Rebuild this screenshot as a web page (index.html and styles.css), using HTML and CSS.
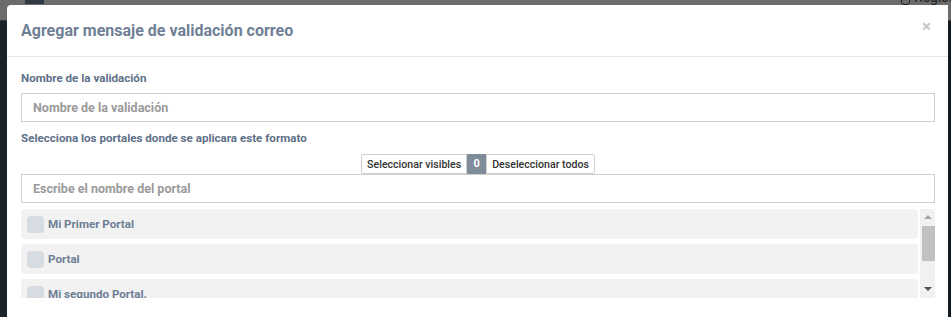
FILE: index.html
```html
<!DOCTYPE html>
<html lang="es">
<head>
    <meta charset="UTF-8">
    <title>Agregar mensaje de validación correo</title>
    <link rel="stylesheet" href="styles.css">
</head>
<body>
    <div class="app">
        <div class="topbar">
            <span class="tab"></span>
            <span class="user"><span class="user-icon"></span>Registro</span>
        </div>
    </div>

    <div class="modal">
        <div class="modal-header">
            <h4>Agregar mensaje de validación correo</h4>
            <span class="close">&times;</span>
        </div>
        <div class="modal-body">
            <label class="field-label">Nombre de la validación</label>
            <input type="text" class="field" placeholder="Nombre de la validación">

            <label class="field-label second">Selecciona los portales donde se aplicara este formato</label>
            <div class="btn-group">
                <button>Seleccionar visibles</button>
                <span class="badge">0</span>
                <button>Deseleccionar todos</button>
            </div>
            <input type="text" class="field" placeholder="Escribe el nombre del portal">

            <div class="list-wrap">
                <div class="portal-list">
                    <div class="portal"><span class="check"></span>Mi Primer Portal</div>
                    <div class="portal"><span class="check"></span>Portal</div>
                    <div class="portal"><span class="check"></span>Mi segundo Portal.</div>
                </div>
                <div class="scrollbar">
                    <span class="arrow up"></span>
                    <span class="thumb"></span>
                    <span class="arrow down"></span>
                </div>
            </div>
        </div>
    </div>
</body>
</html>
```

FILE: styles.css
```css
body {
    margin: 0;
    font-family: Roboto, "Liberation Sans", sans-serif;
    background-color: #0f1b21;
    height: 317px;
    overflow: hidden;
}

.app {
    height: 100%;
    background: linear-gradient(90deg, #1b2228 0, #1b2228 7px, transparent 7px);
}

.topbar {
    height: 20px;
    background-color: #6c6c6c;
    display: flex;
    justify-content: space-between;
    padding-left: 25px;
    border-bottom: 1px solid #3d3d3d;
}

.tab {
    width: 19px;
    height: 4px;
    background-color: #2f3a44;
}

.user {
    color: #222;
    font-size: 14px;
    line-height: 16px;
    height: 5px;
    padding-right: 2px;
    width: 48px;
    white-space: nowrap;
    overflow: hidden;
    display: flex;
    align-items: flex-end;
    gap: 4px;
}

.user-icon {
    width: 7px;
    height: 12px;
    border: 1px solid #222;
    border-radius: 3px;
    flex-shrink: 0;
}

/* Modal */
.modal {
    position: absolute;
    top: 5px;
    left: 7px;
    right: 3px;
    bottom: 0;
    overflow: hidden;
    background-color: #fff;
    border-radius: 4px 0 0 0;
}

.modal-header {
    display: flex;
    justify-content: space-between;
    align-items: center;
    padding: 16px 14px 15px 14px;
    border-bottom: 1px solid #e5e5e5;
}

.modal-header h4 {
    margin: 0;
    font-size: 16px;
    font-weight: 700;
    line-height: 20px;
    color: #6f7f95;
}

.close {
    font-size: 17px;
    line-height: 20px;
    color: #c8c8c8;
    font-weight: 700;
    margin-right: 3px;
    margin-top: -10px;
}

.modal-body {
    padding: 13px 13px 0 14px;
    display: flex;
    flex-direction: column;
}

.field-label {
    font-size: 11.6px;
    font-weight: 700;
    line-height: 17px;
    color: #5e7087;
    margin-bottom: 6px;
}

.field-label.second {
    margin-top: 8px;
}

.field {
    height: 29px;
    box-sizing: border-box;
    border: 1px solid #cfcfcf;
    padding: 0 11px;
    font-family: inherit;
    font-size: 12.5px;
    outline: none;
}

.field::placeholder {
    color: #9a9a9a;
    font-weight: 700;
}

.btn-group {
    display: flex;
    align-self: center;
    height: 20px;
    margin-top: 1px;
}

.btn-group button {
    font-family: inherit;
    font-size: 10.6px;
    font-weight: 500;
    color: #333;
    background-color: #fff;
    border: 1px solid #d0d0d0;
    padding: 0 5px;
    height: 20px;
    border-radius: 2px 0 0 2px;
}

.btn-group button:last-child {
    border-radius: 0 2px 2px 0;
}

.badge {
    background-color: #7f8c9a;
    color: #fff;
    font-size: 11px;
    font-weight: 700;
    width: 19px;
    height: 20px;
    line-height: 20px;
    text-align: center;
}

.list-wrap {
    display: flex;
    gap: 2px;
    margin-top: 6px;
    height: 89px;
}

.portal-list {
    flex: 1;
    overflow: hidden;
}

.portal {
    display: flex;
    align-items: center;
    gap: 4px;
    height: 30px;
    margin-bottom: 5px;
    padding-left: 6px;
    background-color: #f2f2f2;
    border-radius: 4px;
    font-size: 11.6px;
    font-weight: 700;
    color: #6d7e95;
}

.check {
    width: 17px;
    height: 17px;
    border-radius: 4px;
    background-color: #d6dce1;
}

/* Scrollbar */
.scrollbar {
    width: 15px;
    background-color: #f1f1f1;
    display: flex;
    flex-direction: column;
    align-items: center;
}

.arrow {
    width: 0;
    height: 0;
    border-left: 4px solid transparent;
    border-right: 4px solid transparent;
}

.arrow.up {
    margin-top: 6px;
    border-bottom: 4px solid #a3a3a3;
}

.arrow.down {
    margin-top: auto;
    margin-bottom: 7px;
    border-top: 4px solid #505050;
}

.thumb {
    width: 13px;
    height: 35px;
    margin: 7px 0 0 2px;
    background-color: #c1c1c1;
}
```
